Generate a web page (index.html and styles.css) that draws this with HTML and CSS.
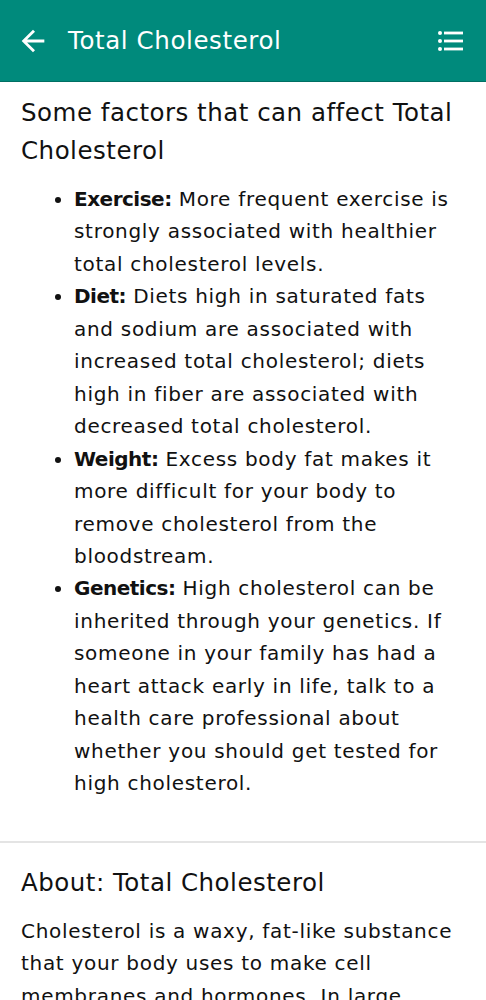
FILE: index.html
```html
<!DOCTYPE html>
<html lang="en">
<head>
<meta charset="utf-8">
<title>Total Cholesterol</title>
<link rel="stylesheet" href="styles.css">
</head>
<body>
<header class="appbar">
  <button class="icon-btn back" aria-label="Back">
    <svg viewBox="0 0 24 24" width="34" height="34"><path fill="#fff" d="M20 11H7.83l5.59-5.59L12 4l-8 8 8 8 1.41-1.41L7.83 13H20v-2z"/></svg>
  </button>
  <h1 class="title">Total Cholesterol</h1>
  <button class="icon-btn menu" aria-label="Contents">
    <svg viewBox="0 0 28 22" width="28" height="22"><circle cx="3" cy="3" r="2" fill="#fff"/><circle cx="3" cy="11" r="2" fill="#fff"/><circle cx="3" cy="19" r="2" fill="#fff"/><rect x="7" y="1.6" width="19" height="2.8" fill="#fff"/><rect x="7" y="9.6" width="19" height="2.8" fill="#fff"/><rect x="7" y="17.6" width="19" height="2.8" fill="#fff"/></svg>
  </button>
</header>
<main>
  <section class="section">
    <h2 class="heading">Some factors that can affect Total<br>Cholesterol</h2>
    <ul class="factors">
      <li><b>Exercise:</b> More frequent exercise is<br>strongly associated with healthier<br>total cholesterol levels.</li>
      <li><b>Diet:</b> Diets high in saturated fats<br>and sodium are associated with<br>increased total cholesterol; diets<br>high in fiber are associated with<br>decreased total cholesterol.</li>
      <li><b>Weight:</b> Excess body fat makes it<br>more difficult for your body to<br>remove cholesterol from the<br>bloodstream.</li>
      <li><b>Genetics:</b> High cholesterol can be<br>inherited through your genetics. If<br>someone in your family has had a<br>heart attack early in life, talk to a<br>health care professional about<br>whether you should get tested for<br>high cholesterol.</li>
    </ul>
  </section>
  <section class="section about">
    <h2 class="heading">About: Total Cholesterol</h2>
    <p class="text">Cholesterol is a waxy, fat-like substance<br>that your body uses to make cell<br>membranes and hormones. In large<br>amounts, cholesterol can build up in<br>your arteries.</p>
  </section>
</main>
</body>
</html>
```
FILE: styles.css
```css
* { box-sizing: border-box; }
html, body { margin: 0; padding: 0; background: #fff; }
body {
  font-family: "DejaVu Sans", "Liberation Sans", sans-serif;
  color: #111;
}
.appbar {
  height: 82px;
  background: #008a7c;
  border-bottom: 1px solid #006f63;
  display: flex;
  align-items: center;
  padding: 0 16px 0 16px;
}
.icon-btn {
  background: none;
  border: 0;
  padding: 0;
  display: flex;
  align-items: center;
  justify-content: center;
  cursor: pointer;
}
.back { width: 34px; height: 34px; margin-left: 0; }
.title {
  margin: 0 0 0 18px;
  flex: 1;
  color: #fff;
  font-size: 24.5px;
  font-weight: 400;
  letter-spacing: 0.6px;
  white-space: nowrap;
}
.menu { width: 28px; height: 22px; margin-right: 5px; }
.section { padding: 0 21px; }
.section + .section { border-top: 2px solid #e4e4e4; }
.heading {
  margin: 0;
  font-size: 24.5px;
  font-weight: 400;
  line-height: 38px;
  padding-top: 12px;
  letter-spacing: 0.5px;
  white-space: nowrap;
}
.factors {
  margin: 13px 0 0 0;
  padding: 0 0 41px 53px;
  font-size: 20px;
  line-height: 32.45px;
  letter-spacing: 0.7px;
  white-space: nowrap;
}
.factors b { font-weight: 700; letter-spacing: -0.5px; }
.about .heading { padding-top: 21px; }
.text {
  margin: 13px 0 0 0;
  font-size: 20px;
  line-height: 32.5px;
  letter-spacing: 0.7px;
  white-space: nowrap;
}
```
